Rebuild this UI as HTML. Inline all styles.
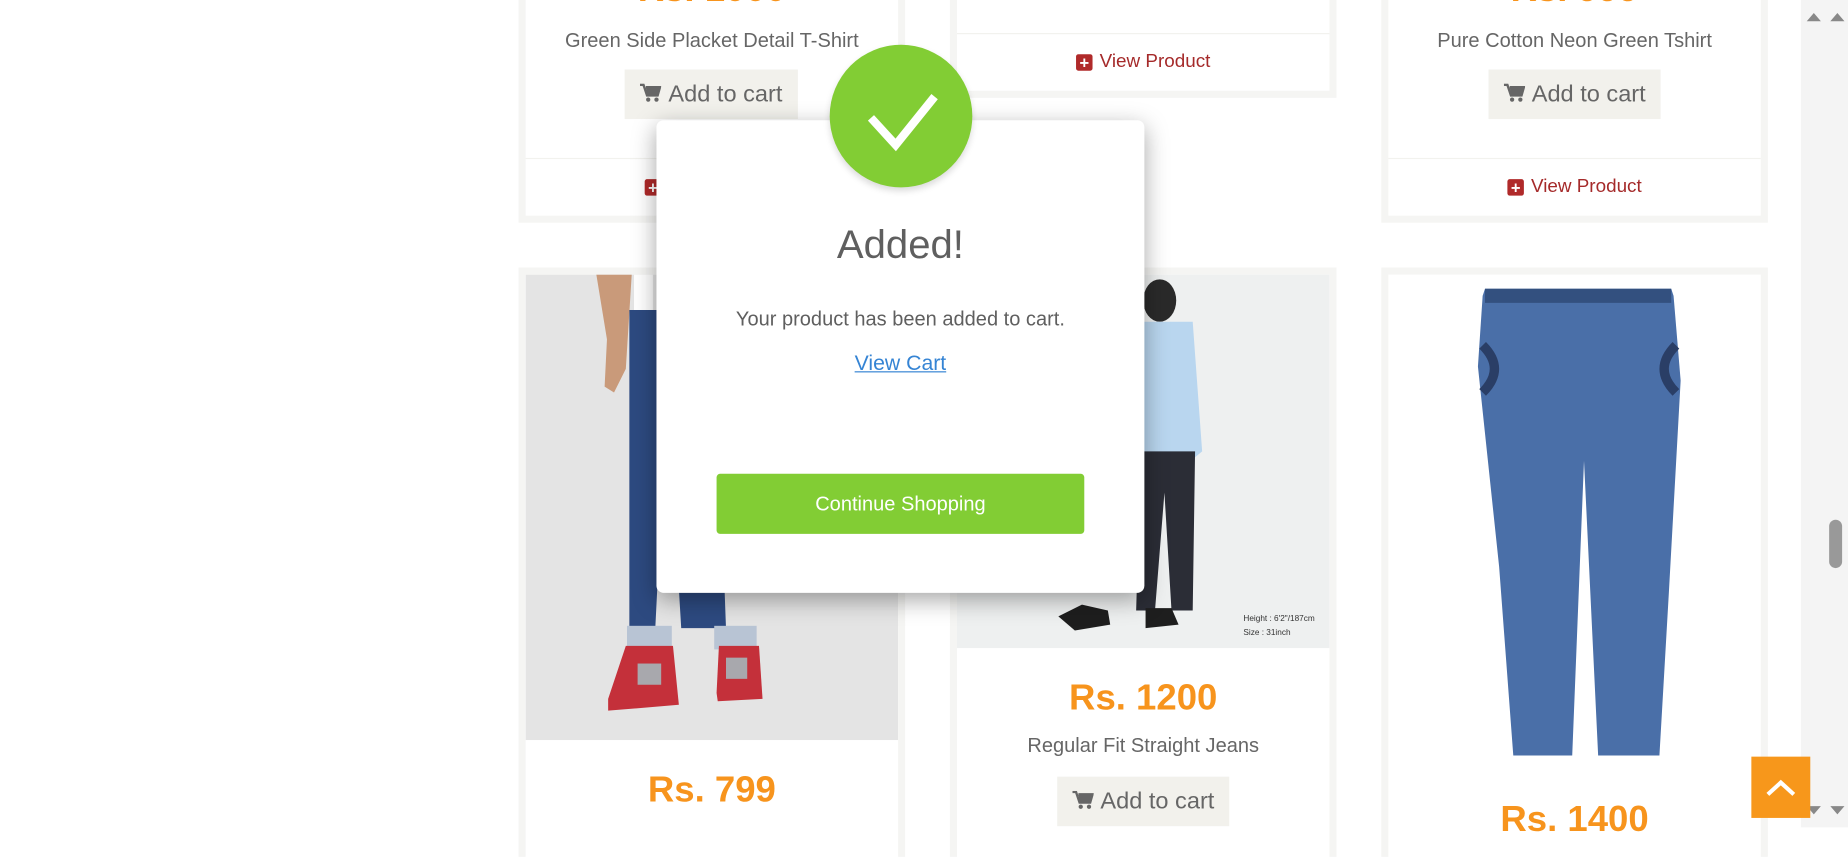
<!DOCTYPE html>
<html><head><meta charset="utf-8"><style>
html,body{margin:0;padding:0;width:1848px;height:827px;overflow:hidden;background:#fff;font-family:"Liberation Sans",sans-serif}
#w{position:absolute;left:0;top:0;width:1568px;height:702px;transform:scale(1.178571);transform-origin:0 0}
.a{position:absolute}
.card{position:absolute;background:#f5f5f3}
.in{position:absolute;background:#fff}
.t{position:absolute;text-align:center;color:#666;font-size:17px}
.price{position:absolute;text-align:center;color:#f7941d;font-weight:bold;font-size:31px}
.btn{position:absolute;background:#f2f1ec;color:#666;font-size:20px;line-height:42px;text-align:center}
.vp{position:absolute;text-align:center;color:#a52a2a;font-size:16px}
.plus{display:inline-block;width:14px;height:14px;background:#b02a2a;border-radius:2px;color:#fff;font-size:14px;line-height:14px;font-weight:bold;vertical-align:-1px;margin-right:6px}
.div{position:absolute;height:1px;background:#f2f2ee}
</style></head><body><div id="w">
<!-- row 1 -->
<div class="card" style="left:440px;top:-10px;width:328px;height:199px"></div>
<div class="in" style="left:446px;top:-10px;width:316px;height:193px"></div>
<div class="price" style="left:446px;top:-27px;width:316px">Rs. 1000</div>
<div class="t" style="left:446px;top:25px;width:316px">Green Side Placket Detail T-Shirt</div>
<div class="btn" style="left:530px;top:59px;width:147px;height:42px"><svg width="18" height="16" viewBox="0 0 18 16" style="vertical-align:-1px;margin-right:6px"><path d="M0 1h3l3 9h9l2-7H5" fill="none" stroke="#666" stroke-width="2"/><path d="M5 3h12l-2 7H6z" fill="#666"/><circle cx="7" cy="13.5" r="1.8" fill="#666"/><circle cx="14" cy="13.5" r="1.8" fill="#666"/></svg>Add to cart</div>
<div class="div" style="left:446px;top:134px;width:316px"></div>
<div class="vp" style="left:446px;top:150px;width:316px"><span class="plus">+</span>View Product</div>

<div class="card" style="left:806px;top:-10px;width:328px;height:93px"></div>
<div class="in" style="left:812px;top:-10px;width:316px;height:87px"></div>
<div class="div" style="left:812px;top:28px;width:316px"></div>
<div class="vp" style="left:812px;top:44px;width:316px"><span class="plus">+</span>View Product</div>

<div class="card" style="left:1172px;top:-10px;width:328px;height:199px"></div>
<div class="in" style="left:1178px;top:-10px;width:316px;height:193px"></div>
<div class="price" style="left:1178px;top:-27px;width:316px">Rs. 999</div>
<div class="t" style="left:1178px;top:25px;width:316px">Pure Cotton Neon Green Tshirt</div>
<div class="btn" style="left:1263px;top:59px;width:146px;height:42px"><svg width="18" height="16" viewBox="0 0 18 16" style="vertical-align:-1px;margin-right:6px"><path d="M0 1h3l3 9h9l2-7H5" fill="none" stroke="#666" stroke-width="2"/><path d="M5 3h12l-2 7H6z" fill="#666"/><circle cx="7" cy="13.5" r="1.8" fill="#666"/><circle cx="14" cy="13.5" r="1.8" fill="#666"/></svg>Add to cart</div>
<div class="div" style="left:1178px;top:134px;width:316px"></div>
<div class="vp" style="left:1178px;top:150px;width:316px"><span class="plus">+</span>View Product</div>

<!-- row 2 -->
<div class="card" style="left:440px;top:227px;width:328px;height:500px"></div>
<div class="in" style="left:446px;top:233px;width:316px;height:500px"></div>
<svg class="a" style="left:446px;top:233px" width="316" height="395" viewBox="0 0 316 395">
<rect width="316" height="395" fill="#e4e4e4"/>
<path d="M60 0h30l-5 80-10 20-8-5 2-40z" fill="#c99a7a"/>
<rect x="92" y="0" width="16" height="40" fill="#fff"/>
<path d="M88 30h72l10 270h-38l-12-200-10 200H88z" fill="#2d4a80"/>
<rect x="86" y="298" width="38" height="20" fill="#b8c4d4"/>
<rect x="160" y="298" width="36" height="20" fill="#b8c4d4"/>
<path d="M70 360l15-45h40l5 50-60 5z" fill="#c4303a"/>
<path d="M162 355l2-40h34l3 45-38 2z" fill="#c4303a"/>
<rect x="95" y="330" width="20" height="18" fill="#a8a8ad"/>
<rect x="170" y="325" width="18" height="18" fill="#a8a8ad"/>
</svg>
<div class="price" style="left:446px;top:652px;width:316px">Rs. 799</div>

<div class="card" style="left:806px;top:227px;width:328px;height:500px"></div>
<div class="in" style="left:812px;top:233px;width:316px;height:500px"></div>
<svg class="a" style="left:812px;top:233px" width="316" height="317" viewBox="0 0 316 317">
<rect width="316" height="317" fill="#eef0f0"/>
<ellipse cx="172" cy="22" rx="14" ry="18" fill="#2a2a2a"/>
<path d="M155 40h45l8 110-6 5-2 10h-45z" fill="#b9d6ef"/>
<path d="M156 150h46l-2 135h-18l-6-100-8 100h-16z" fill="#2b2d36"/>
<path d="M86 290l20-10 22 5 2 12-30 5z" fill="#1e1e1e"/>
<path d="M160 283h22l6 14-28 3z" fill="#1e1e1e"/>
<text x="243" y="294" font-size="7" fill="#333" font-family="Liberation Sans">Height : 6'2"/187cm</text>
<text x="243" y="306" font-size="7" fill="#333" font-family="Liberation Sans">Size : 31inch</text>
</svg>
<div class="price" style="left:812px;top:574px;width:316px">Rs. 1200</div>
<div class="t" style="left:812px;top:623px;width:316px">Regular Fit Straight Jeans</div>
<div class="btn" style="left:897px;top:659px;width:146px;height:42px"><svg width="18" height="16" viewBox="0 0 18 16" style="vertical-align:-1px;margin-right:6px"><path d="M0 1h3l3 9h9l2-7H5" fill="none" stroke="#666" stroke-width="2"/><path d="M5 3h12l-2 7H6z" fill="#666"/><circle cx="7" cy="13.5" r="1.8" fill="#666"/><circle cx="14" cy="13.5" r="1.8" fill="#666"/></svg>Add to cart</div>

<div class="card" style="left:1172px;top:227px;width:328px;height:500px"></div>
<div class="in" style="left:1178px;top:233px;width:316px;height:500px"></div>
<svg class="a" style="left:1178px;top:233px" width="316" height="420" viewBox="0 0 316 420">
<path d="M82 12h158l2 6 6 72-10 180-8 138h-52l-12-250-10 250h-50l-12-160-18-170 4-60z" fill="#4a6fa8"/>
<path d="M82 12h158v12H82z" fill="#33507f"/>
<path d="M80 60q20 20 0 40M244 60q-20 20 0 40" stroke="#2a3e66" stroke-width="8" fill="none"/>
</svg>
<div class="price" style="left:1178px;top:677px;width:316px">Rs. 1400</div>

<!-- scrollbar -->
<div class="a" style="left:1528px;top:0;width:40px;height:702px;background:#f4f4f4"></div>
<div class="a" style="left:1552px;top:441px;width:11px;height:41px;background:#999;border-radius:6px"></div>
<svg class="a" style="left:1530px;top:8px" width="38" height="12"><path d="M3 10l6-7 6 7zM23 10l6-7 6 7z" fill="#888"/></svg>
<svg class="a" style="left:1530px;top:682px" width="38" height="12"><path d="M3 2l6 7 6-7zM23 2l6 7 6-7z" fill="#888"/></svg>
<div class="a" style="left:1486px;top:642px;width:50px;height:52px;background:#f7971b"></div>
<svg class="a" style="left:1486px;top:642px" width="50" height="52"><path d="M14 32l11-10 11 10" stroke="#fff" stroke-width="3.5" fill="none"/></svg>

<!-- modal -->
<div class="a" style="left:557px;top:102px;width:414px;height:401px;background:#fff;border-radius:6px;box-shadow:0 6px 20px rgba(0,0,0,.35)"></div>
<div class="a" style="left:704px;top:38px;width:121px;height:121px;border-radius:50%;background:#82cd34;box-shadow:0 3px 6px rgba(0,0,0,.15)"></div>
<svg class="a" style="left:704px;top:38px" width="121" height="121"><path d="M35 62l21 23 33-41" stroke="#fff" stroke-width="7" fill="none"/></svg>
<div class="t" style="left:557px;top:189px;width:414px;font-size:34px;color:#5f5f5f">Added!</div>
<div class="t" style="left:557px;top:261px;width:414px;font-size:17px;color:#5f5f5f">Your product has been added to cart.</div>
<div class="t" style="left:557px;top:298px;width:414px;font-size:18px;color:#3584d4;text-decoration:underline">View Cart</div>
<div class="a" style="left:608px;top:402px;width:312px;height:51px;background:#82cd34;border-radius:3px;color:#fff;font-size:17px;line-height:51px;text-align:center">Continue Shopping</div>
</div></body></html>
